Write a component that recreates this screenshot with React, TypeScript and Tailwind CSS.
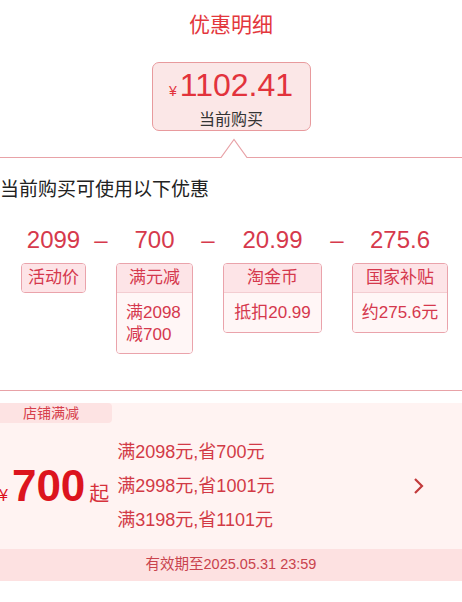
import React from "react";

const font = { fontFamily: '"Liberation Sans", "Noto Sans CJK SC", sans-serif' };

const columns = [
  { value: "2099", width: "w-[65px]" },
  { value: "700", width: "w-[77px]" },
  { value: "20.99", width: "w-[99px]" },
  { value: "275.6", width: "w-[96px]" },
];

const rules = ["满2098元,省700元", "满2998元,省1001元", "满3198元,省1101元"];

function Notch() {
  return (
    <svg width="462" height="27" viewBox="0 0 462 27" className="block">
      <polyline
        points="0,26.5 221,26.5 234,8.5 247,26.5 462,26.5"
        fill="none"
        stroke="#e8a2a7"
        strokeWidth="1.2"
      />
    </svg>
  );
}

function Tag({ title, body, width }: { title: string; body?: React.ReactNode; width: string }) {
  return (
    <div className={`${width} rounded-[4px] border border-[#eaa3ab] overflow-hidden`}>
      <div className="h-[28px] flex items-center justify-center bg-[#fde4e7] text-[17px] text-[#d5384d]">
        {title}
      </div>
      {body}
    </div>
  );
}

export default function App() {
  return (
    <div className="w-[462px] h-[602px] bg-white overflow-hidden" style={font}>
      {/* header */}
      <div className="h-[50px] flex items-center justify-center text-[21px] text-[#e3373d]">优惠明细</div>
      <div className="flex justify-center mt-[12px]">
        <div className="w-[159px] h-[69px] rounded-[7px] border border-[#e89a9d] bg-[#fbe7e7] flex flex-col items-center">
          <div className="flex items-baseline text-[#e2333c] mt-[4px] leading-[36px]">
            <span className="text-[14px] mr-[3px]">¥</span>
            <span className="text-[32px]">1102.41</span>
          </div>
          <div className="text-[16px] text-[#333] leading-[22px]">当前购买</div>
        </div>
      </div>
      <Notch />

      <div className="mt-[19px] text-[19px] leading-[26px] text-[#222]">当前购买可使用以下优惠</div>

      {/* formula */}
      <div className="mt-[23px] pl-[21px] flex text-[24px] leading-[28px] text-[#d6394c]">
        {columns.map((c, i) => (
          <React.Fragment key={c.value}>
            {i > 0 && <div className="w-[30px] text-center">–</div>}
            <div className={`${c.width} text-center`}>{c.value}</div>
          </React.Fragment>
        ))}
      </div>
      <div className="mt-[9px] pl-[21px] flex items-start gap-[30px]">
        <Tag title="活动价" width="w-[65px]" />
        <Tag
          title="满元减"
          width="w-[77px]"
          body={
            <div className="bg-[#fff6f6] border-t border-[#f3cdd1] pl-[9px] pt-[9px] pb-[7px] text-[17px] leading-[22px] text-[#d5384d]">
              <div>满2098</div>
              <div>减700</div>
            </div>
          }
        />
        <Tag
          title="淘金币"
          width="w-[99px]"
          body={
            <div className="h-[40px] bg-[#fff6f6] border-t border-[#f3cdd1] flex items-center justify-center text-[17px] text-[#d5384d]">
              抵扣20.99
            </div>
          }
        />
        <Tag
          title="国家补贴"
          width="w-[96px]"
          body={
            <div className="h-[40px] bg-[#fff6f6] border-t border-[#f3cdd1] flex items-center justify-center text-[17px] text-[#d5384d]">
              约275.6元
            </div>
          }
        />
      </div>

      <div className="mt-[36px] h-px bg-[#e8a2a7]" />

      {/* coupon card */}
      <div className="mt-[12px] bg-[#fff3f2]">
        <div className="w-[112px] h-[20px] rounded-r-[4px] bg-[#fde3e3] flex items-center pl-[23px] text-[14px] text-[#d6404b]">
          店铺满减
        </div>
        <div className="flex items-center pt-[12px] pb-[12px]">
          <div className="flex items-baseline ml-[-1px] text-[#dc141e]">
            <span className="text-[16px] mr-[4px]">¥</span>
            <span className="text-[44px] font-bold leading-[46px]">700</span>
            <span className="text-[20px] ml-[4px] text-[#d6313b]">起</span>
          </div>
          <div className="ml-[8px] flex flex-col text-[18px] leading-[34px] text-[#d23a46]">
            {rules.map((r) => (
              <div key={r}>{r}</div>
            ))}
          </div>
          <div className="ml-auto mr-[36px]">
            <svg width="14" height="18" viewBox="0 0 14 18">
              <polyline points="3,2 10,9 3,16" fill="none" stroke="#c23a3c" strokeWidth="2.2" />
            </svg>
          </div>
        </div>
        <div className="h-[32px] bg-[#fde1e1] flex items-center justify-center text-[14.5px] text-[#c9434d]">
          有效期至2025.05.31 23:59
        </div>
      </div>
    </div>
  );
}
